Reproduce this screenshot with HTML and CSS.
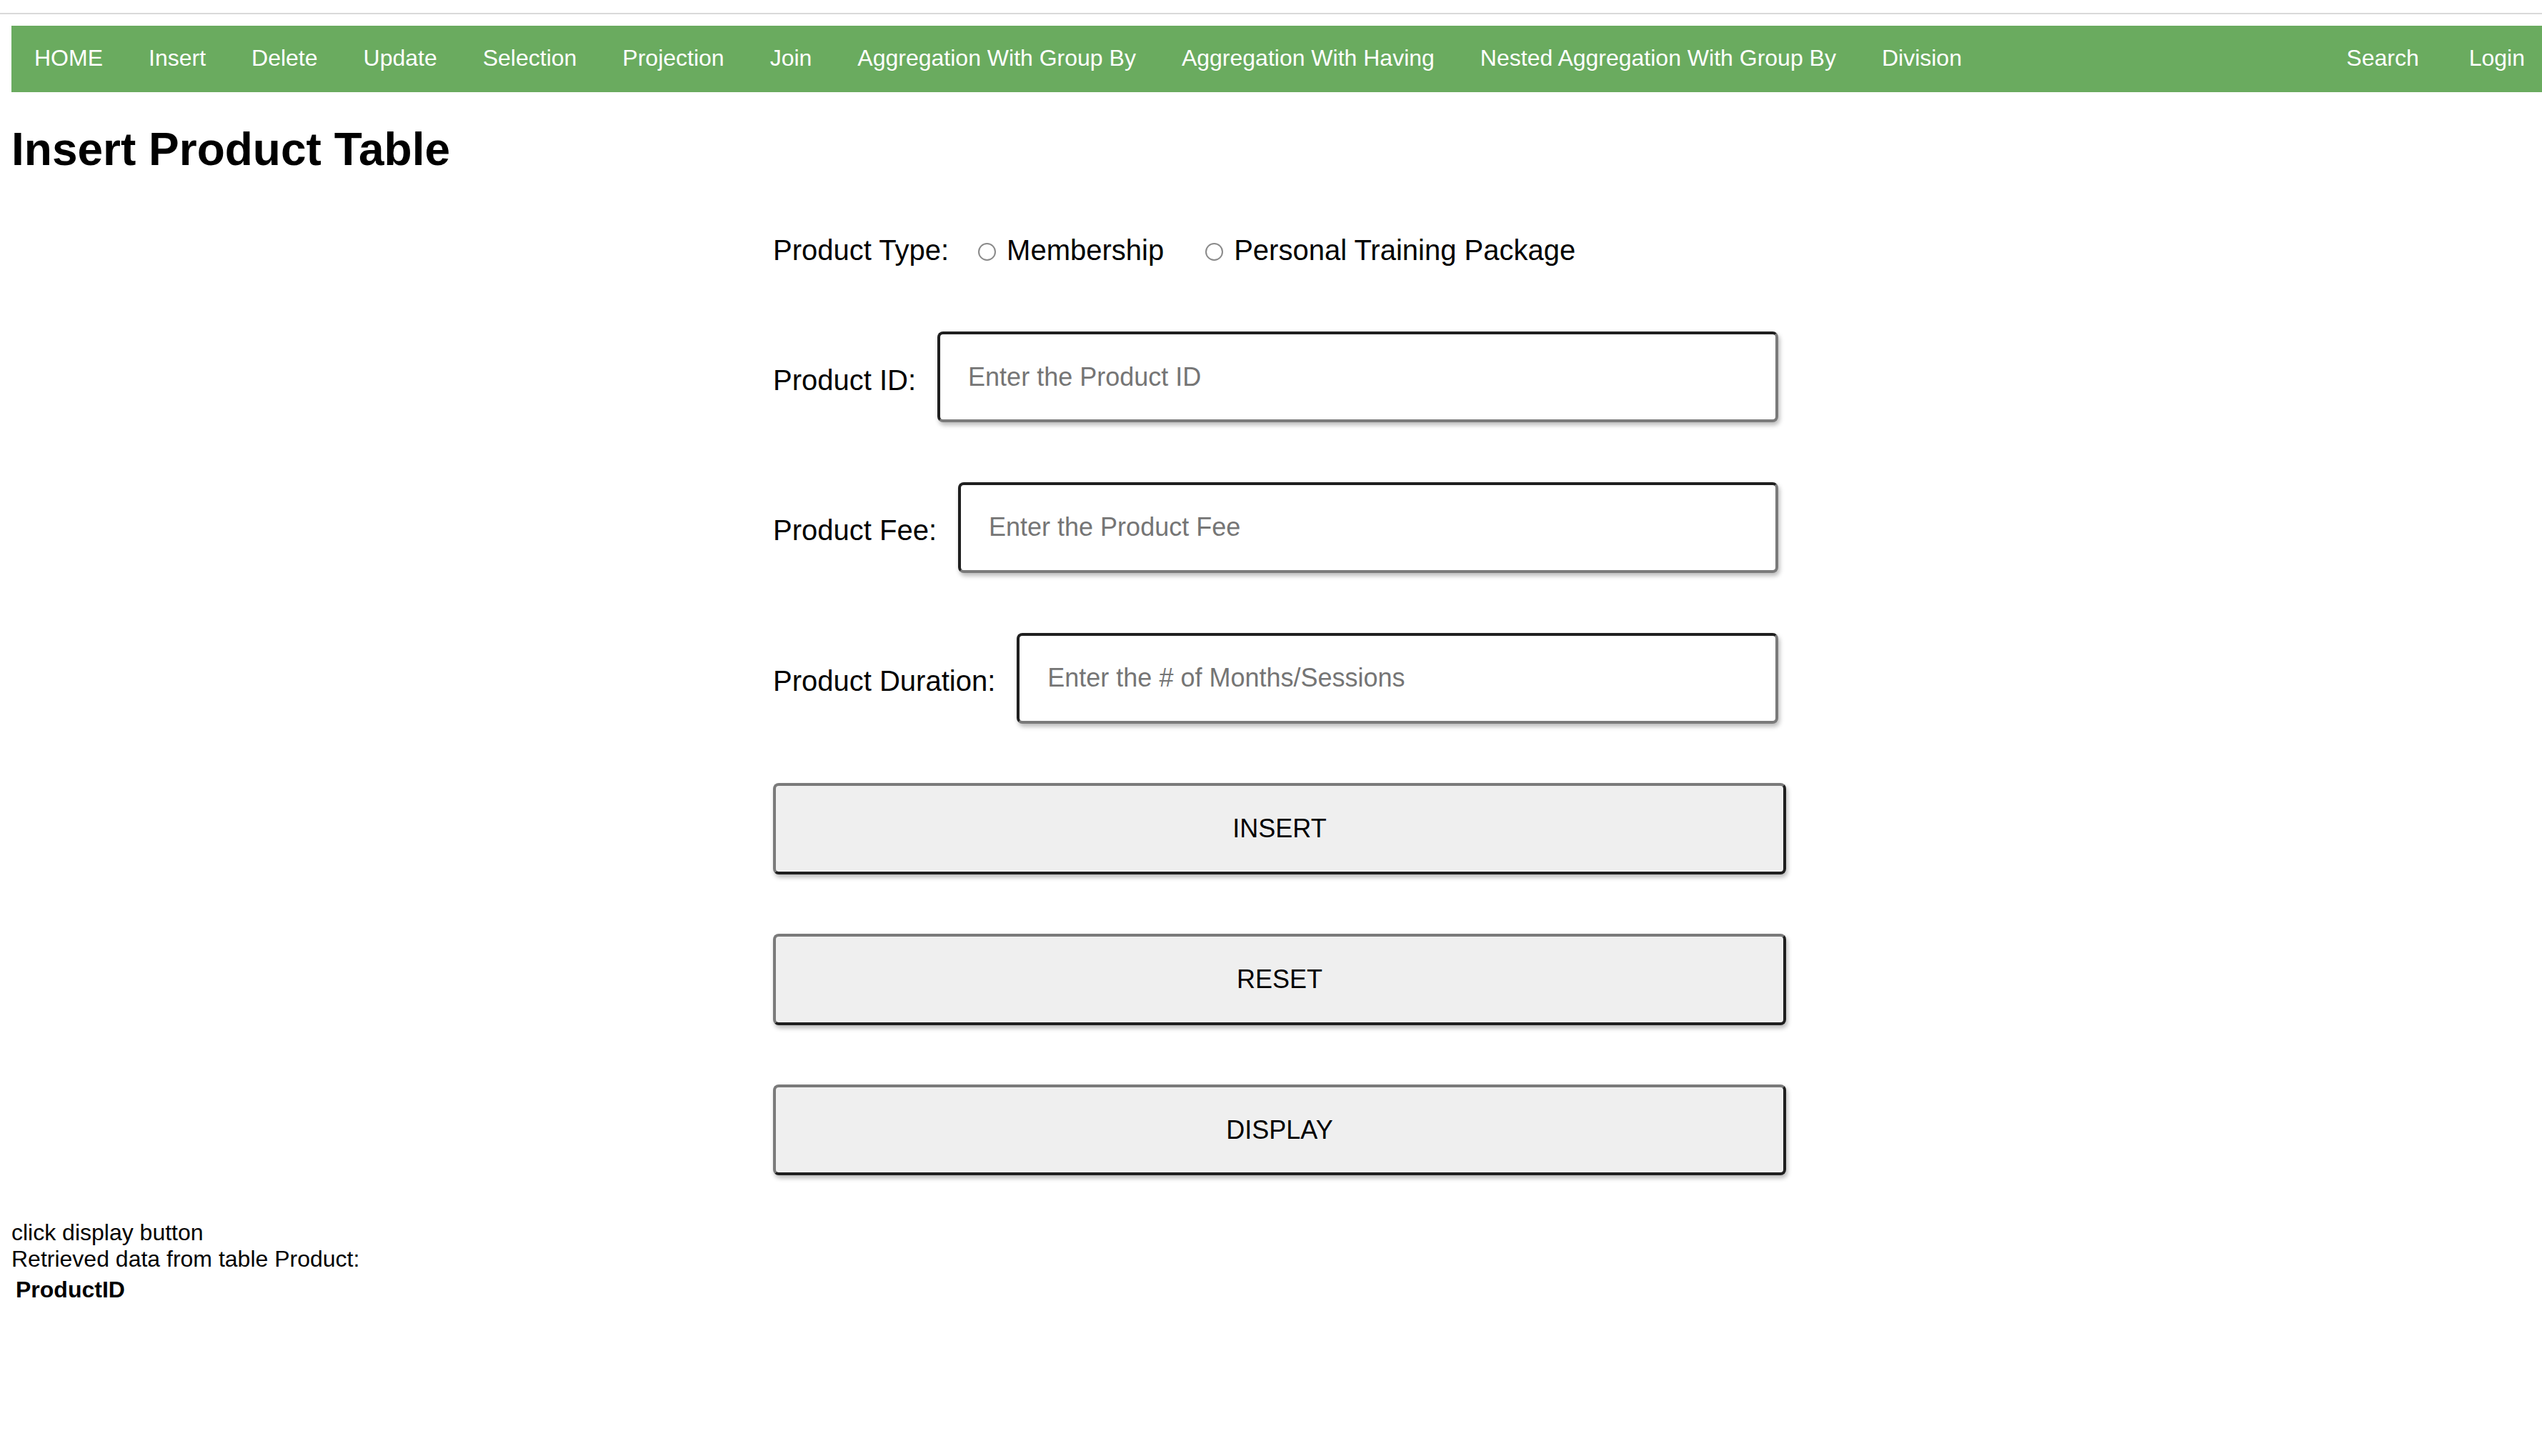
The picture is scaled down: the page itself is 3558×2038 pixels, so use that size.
FILE: index.html
```html
<!DOCTYPE html>
<html lang="en">
<head>
<meta charset="utf-8">
<title>Insert Product Table</title>
<link rel="stylesheet" href="styles.css">
</head>
<body>
<div class="chrome"></div>
<div class="page">
  <nav class="topnav">
    <a href="#">HOME</a>
    <a href="#">Insert</a>
    <a href="#">Delete</a>
    <a href="#">Update</a>
    <a href="#">Selection</a>
    <a href="#">Projection</a>
    <a href="#">Join</a>
    <a href="#">Aggregation With Group By</a>
    <a href="#">Aggregation With Having</a>
    <a href="#">Nested Aggregation With Group By</a>
    <a href="#">Division</a>
    <div class="nav-right">
      <a class="nav-search" href="#">Search</a>
      <a href="#">Login</a>
    </div>
  </nav>

  <h1 class="title">Insert Product Table</h1>

  <form class="form">
    <div class="type-row">
      <span class="type-label">Product Type:</span>
      <input class="radio" type="radio" name="ptype" id="membership">
      <label class="opt opt-first" for="membership">Membership</label>
      <input class="radio" type="radio" name="ptype" id="pt">
      <label class="opt" for="pt">Personal Training Package</label>
    </div>

    <div class="field-row">
      <label class="field-label" for="pid">Product ID:</label>
      <input class="field" type="text" id="pid" placeholder="Enter the Product ID">
    </div>
    <div class="field-row">
      <label class="field-label" for="pfee">Product Fee:</label>
      <input class="field" type="text" id="pfee" placeholder="Enter the Product Fee">
    </div>
    <div class="field-row">
      <label class="field-label" for="pdur">Product Duration:</label>
      <input class="field" type="text" id="pdur" placeholder="Enter the # of Months/Sessions">
    </div>

    <button class="btn" type="button">INSERT</button>
    <button class="btn" type="button">RESET</button>
    <button class="btn btn-last" type="button">DISPLAY</button>
  </form>

  <div class="result">
    <div>click display button</div>
    <div>Retrieved data from table Product:</div>
    <table class="result-table">
      <tr><th>ProductID</th></tr>
    </table>
  </div>
</div>
</body>
</html>
```

FILE: styles.css
```css
html {
  overflow: hidden;
}

body {
  margin: 0;
  font-family: "Liberation Sans", Arial, Helvetica, sans-serif;
  color: #000;
  background: #fff;
}

.chrome {
  height: 18px;
  border-bottom: 2px solid #d9d9d9;
}

.page {
  width: 3550px;
  padding: 16px;
}

.topnav {
  display: flex;
  background: #6aab5f;
}

.topnav a {
  display: block;
  color: #fff;
  text-decoration: none;
  font-size: 32px;
  line-height: normal;
  padding: 27px 32px 29px;
  white-space: nowrap;
}

.nav-right {
  display: flex;
  margin-left: auto;
}

.topnav .nav-search {
  margin-right: 6px;
}

.title {
  font-size: 64px;
  font-weight: bold;
  line-height: normal;
  margin: 43px 0;
}

.form {
  width: 1418px;
  margin: 0 auto;
  padding: 39px 0 62px;
}

.type-row {
  display: flex;
  align-items: center;
  font-size: 40px;
  line-height: normal;
  margin-bottom: 91px;
}

.type-label {
  margin-right: 41px;
}

.radio {
  appearance: none;
  -webkit-appearance: none;
  width: 25px;
  height: 25px;
  margin: 4px 15px 0 0;
  border: 2px solid #8a8a8a;
  border-radius: 50%;
  background: #fff;
  flex: none;
  box-sizing: border-box;
}

.opt-first {
  margin-right: 58px;
}

.field-row {
  display: flex;
  align-items: center;
  padding-right: 11px;
  margin-bottom: 83.4px;
}

.field-label {
  font-size: 40px;
  line-height: normal;
  margin-right: 30px;
  padding-top: 9px;
  white-space: nowrap;
}

.field {
  flex: 1;
  min-width: 0;
  box-sizing: border-box;
  height: 127.4px;
  padding: 0 39px;
  font-family: inherit;
  font-size: 36px;
  color: #000;
  background: #fff;
  border: 4px solid;
  border-color: #1f1f1f #7a7a7a #7a7a7a #1f1f1f;
  border-radius: 8px;
  box-shadow: 2px 4px 6px rgba(0, 0, 0, 0.28);
  outline: none;
}

.field::placeholder {
  color: #757575;
}

.btn {
  display: block;
  width: 100%;
  box-sizing: border-box;
  height: 127.4px;
  margin: 0 0 83.4px;
  padding: 0;
  font-family: inherit;
  font-size: 36px;
  color: #000;
  background: #efefef;
  border: 4px solid;
  border-color: #7a7a7a #1f1f1f #1f1f1f #7a7a7a;
  border-radius: 8px;
  box-shadow: 2px 4px 6px rgba(0, 0, 0, 0.28);
}

.btn-last {
  margin-bottom: 0;
}

.result {
  font-size: 32px;
  line-height: normal;
}

.result-table {
  border-spacing: 4px;
  font-size: 32px;
}

.result-table th {
  padding: 2px;
  font-weight: bold;
}
```
